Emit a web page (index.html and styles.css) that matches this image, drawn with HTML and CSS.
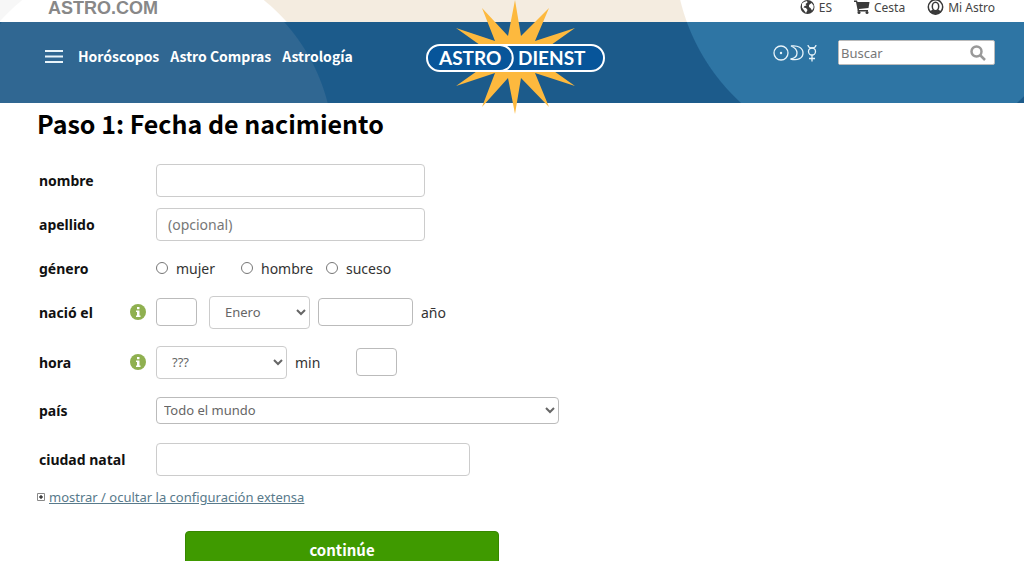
FILE: index.html
```html
<!DOCTYPE html>
<html lang="es">
<head>
    <meta charset="UTF-8">
    <meta name="viewport" content="width=device-width, initial-scale=1.0">
    <title>Paso 1: Fecha de nacimiento</title>
    <link rel="stylesheet" href="styles.css">
</head>
<body>
    <header class="header">
        <!-- top line -->
        <div class="topbar">
            <a class="site-name" href="#">ASTRO.COM</a>
            <div class="user-links">
                <a href="#">
                    <svg class="icon" width="15" height="15" viewBox="0 0 15 15">
                        <circle cx="7.5" cy="7" r="7" fill="#3a3a3a"/>
                        <path d="M2 3.500 4 2 7 1 7.500 2.500 5.500 4 6.500 5.500 4.500 6 3.500 7.500 6 8 7.500 10 6 13 4.500 11 2 7.500ZM9 5 11.500 3 13.500 5.500 13.500 8 12 10.500 10.500 8 9 7Z" fill="#fff"/>
                    </svg>
                    ES
                </a>
                <a href="#">
                    <svg class="icon" width="16" height="14" viewBox="0 0 16 14">
                        <path d="M0 0.500H3L3.500 2H15.500L14.500 8 5 9V10H14V11.500H3.500V9.500L2 2H0Z" fill="#3a3a3a"/>
                        <circle cx="5" cy="12.500" r="1.500" fill="#3a3a3a"/>
                        <circle cx="13" cy="12.500" r="1.500" fill="#3a3a3a"/>
                    </svg>
                    Cesta
                </a>
                <a href="#">
                    <svg class="icon" width="17" height="16" viewBox="0 0 17 16">
                        <circle cx="8.500" cy="7" r="7.200" fill="#fff" stroke="#3a3a3a" stroke-width="1.500"/>
                        <path d="M2.500 11.500C4 10 5.500 10 6.500 9.500H10.500C11.500 10 13 10 14.500 11.500 12 15 5 15 2.500 11.500Z" fill="#3a3a3a"/>
                        <ellipse cx="8.500" cy="6.500" rx="3.200" ry="4.200" fill="#fff" stroke="#3a3a3a" stroke-width="1.500"/>
                    </svg>
                    Mi Astro
                </a>
            </div>
        </div>

        <!-- main navigation -->
        <div class="navbar">
            <nav class="menu">
                <button class="menu-btn" type="button" aria-label="Menú">
                    <svg width="18" height="13" viewBox="0 0 18 13">
                        <path d="M0 1H18M0 6.500H18M0 12H18" stroke="#e8f4fa" stroke-width="2"/>
                    </svg>
                </button>
                <a href="#">Horóscopos</a>
                <a href="#">Astro Compras</a>
                <a href="#">Astrología</a>
            </nav>
            <div class="tools">
                <a class="planets" href="#" aria-label="Planetas">
                    <svg width="44" height="18" viewBox="0 0 44 18" fill="none" stroke="#e8f4fa" stroke-width="1.300">
                        <circle cx="8" cy="9" r="7"/>
                        <circle cx="8" cy="9" r="1.200" fill="#e8f4fa" stroke="none"/>
                        <path d="M18 2C25 1 30 4 30 9S25 17 17.500 15C21 14.500 24 12.500 24 9S22 3.500 18 2Z"/>
                        <circle cx="39" cy="7.500" r="3.500"/>
                        <path d="M35 1C35.500 5 42.500 5 43 1M39 11V17.500M36 14.500H42"/>
                    </svg>
                </a>
                <form class="search">
                    <input type="text" placeholder="Buscar" aria-label="Buscar">
                    <button type="submit" aria-label="Buscar">
                        <svg width="16" height="16" viewBox="0 0 16 16" fill="none" stroke="#999" stroke-width="2.500">
                            <circle cx="6.500" cy="6.500" r="5"/>
                            <path d="M10 10 15 15"/>
                        </svg>
                    </button>
                </form>
            </div>
        </div>

        <!-- logo over both bars -->
        <a class="logo" href="#" aria-label="Astrodienst">
            <svg width="180" height="116" viewBox="0 0 180 116">
                <path fill="#fdb93e" d="M89 0 95 36 123 8 109 41 149 28 118 50 118 64 149 86 109 73 123 107 95 78 89 114 82 78 56 107 69 73 30 86 61 64 61 50 30 28 69 41 56 8 82 36Z"/>
                <rect x="1" y="45" width="177" height="26" rx="13" fill="#07559a" stroke="#fff" stroke-width="2"/>
                <path d="M74 45C91 46 91 70 74 71" fill="none" stroke="#fff" stroke-width="2"/>
                <text class="logo-text" x="13" y="65">ASTRO</text>
                <text class="logo-text" x="92" y="65">DIENST</text>
            </svg>
        </a>
    </header>

    <main class="content">
        <h1>Paso 1: Fecha de nacimiento</h1>

        <form class="birth-form">
            <div class="row">
                <label class="name" for="nombre">nombre</label>
                <input class="field wide" type="text" id="nombre">
            </div>
            <div class="row">
                <label class="name" for="apellido">apellido</label>
                <input class="field wide" type="text" id="apellido" placeholder="(opcional)">
            </div>
            <div class="row" role="radiogroup" aria-labelledby="genero">
                <span class="name" id="genero">género</span>
                <div class="radios">
                    <label><input type="radio" name="genero">mujer</label>
                    <label><input type="radio" name="genero">hombre</label>
                    <label><input type="radio" name="genero">suceso</label>
                </div>
            </div>
            <div class="row">
                <label class="name" for="dia">nació el
                    <svg class="info" width="16" height="16" viewBox="0 0 16 16">
                        <circle cx="8" cy="8" r="8" fill="#8fb050"/>
                        <path d="M7 3H9.500V5.200H7ZM6 6.500H9.500V11.500H10.500V13H6V11.500H7V8H6Z" fill="#fff"/>
                    </svg>
                </label>
                <input class="field small" type="text" id="dia">
                <select class="field month" aria-label="mes">
                    <option>Enero</option>
                    <option>Febrero</option>
                    <option>Marzo</option>
                </select>
                <input class="field small year" type="text" id="anio">
                <label for="anio">año</label>
            </div>
            <div class="row row-hour">
                <label class="name" for="hora">hora
                    <svg class="info" width="16" height="16" viewBox="0 0 16 16">
                        <circle cx="8" cy="8" r="8" fill="#8fb050"/>
                        <path d="M7 3H9.500V5.200H7ZM6 6.500H9.500V11.500H10.500V13H6V11.500H7V8H6Z" fill="#fff"/>
                    </svg>
                </label>
                <select class="field hour" id="hora">
                    <option>???</option>
                </select>
                <label class="min" for="min">min</label>
                <input class="field small" type="text" id="min">
            </div>
            <div class="row row-country">
                <label class="name" for="pais">país</label>
                <select class="field country" id="pais">
                    <option>Todo el mundo</option>
                </select>
            </div>
            <div class="row row-city">
                <label class="name" for="ciudad">ciudad natal</label>
                <input class="field city" type="text" id="ciudad">
            </div>

            <div class="extended">
                <svg width="8" height="8" viewBox="0 0 8 8" fill="none">
                    <path d="M0.500 0.500H7.500V7.500H0.500Z" stroke="#888"/>
                    <path d="M2 4H6M4 2V6" stroke="#000"/>
                </svg>
                <a href="#">mostrar / ocultar la configuración extensa</a>
            </div>

            <button class="submit" type="submit">continúe</button>
        </form>
    </main>
</body>
</html>
```
FILE: styles.css
```css
* {
    margin: 0;
    padding: 0;
    box-sizing: border-box;
}

body {
    background: #fff;
    color: #333;
    font-family: "Noto Sans", sans-serif;
    font-size: 14px;
}

a {
    color: inherit;
    text-decoration: none;
}

svg {
    display: block;
}

input,
select,
button {
    font-family: inherit;
    font-size: inherit;
}

/* header */
.header {
    position: relative;
}

.topbar {
    display: flex;
    justify-content: space-between;
    height: 22px;
    padding: 0 29px 0 48px;
    background:
        radial-gradient(circle at 143px 150px, #fff 192px, transparent 193px),
        radial-gradient(circle at calc(100% - 145px) -48px, #fff 204px, transparent 205px),
        linear-gradient(90deg, #f7f7f7 100px, #f4ece0 100px);
}

.site-name {
    color: #888;
    font: bold 18px/16px "Liberation Sans", Arial, sans-serif;
}

.user-links {
    display: flex;
    gap: 22px;
    color: #444;
    font-size: 12px;
    line-height: 16px;
}

.user-links a {
    display: flex;
    gap: 4px;
}

.navbar {
    display: flex;
    justify-content: space-between;
    height: 81px;
    padding: 18px 29px 0 45px;
    background:
        radial-gradient(circle at 143px 128px, #306792 190px, transparent 191px),
        radial-gradient(circle at calc(100% - 145px) -70px, #2e75a4 204px, transparent 205px),
        #1c5b8b;
}

.menu {
    display: flex;
    align-items: center;
    gap: 11px;
    height: 32px;
    color: #fff;
    font: bold 14px "Noto Sans CJK SC", sans-serif;
}

.menu-btn {
    margin-right: 4px;
    background: none;
    border: none;
}

.tools {
    display: flex;
    gap: 21px;
}

.planets {
    padding-top: 4px;
}

.search {
    display: flex;
    width: 157px;
    height: 25px;
    background: #fff;
    border: 1px solid #bbb;
    border-radius: 2px;
}

.search input {
    flex: 1;
    min-width: 0;
    padding-left: 2px;
    border: none;
    font-size: 13px;
}

.search button {
    padding: 0 8px;
    background: none;
    border: none;
}

.logo {
    position: absolute;
    top: 0;
    left: 50%;
    margin-left: -86px;
}

.logo-text {
    fill: #fff;
    font: bold 19px Lato, sans-serif;
}

/* form */
.content {
    padding: 0 37px;
}

h1 {
    color: #000;
    font: bold 25px/40px "Noto Sans CJK SC", sans-serif;
}

.birth-form {
    padding-top: 15px;
}

.row {
    display: flex;
    align-items: center;
    height: 44px;
}

.row-hour {
    height: 56px;
}

.row-country {
    height: 40px;
}

.row-city {
    height: 58px;
}

.name {
    display: flex;
    align-items: center;
    justify-content: space-between;
    width: 119px;
    padding: 0 10px 0 2px;
    color: #111;
    font-weight: bold;
}

.field {
    height: 33px;
    padding: 0 11px;
    background: #fff;
    border: 1px solid #ccc;
    border-radius: 4px;
    color: #666;
}

.field::placeholder,
.search input::placeholder {
    color: #777;
}

.wide {
    width: 269px;
}

.small {
    width: 41px;
    height: 28px;
    border-color: #bbb;
}

select.field {
    font-size: 13px;
}

.month {
    width: 101px;
    margin: 0 8px 0 12px;
}

.year {
    width: 95px;
    margin-right: 8px;
}

.hour {
    width: 131px;
    margin-right: 8px;
}

.min {
    width: 61px;
}

.country {
    width: 403px;
    height: 27px;
    padding: 0 3px;
    border-color: #bbb;
}

.city {
    width: 314px;
}

.radios {
    display: flex;
}

.radios label {
    display: flex;
    align-items: center;
    gap: 8px;
    width: 85px;
}

.radios input {
    width: 12px;
    height: 12px;
}

.extended {
    display: flex;
    align-items: center;
    gap: 4px;
    height: 18px;
    font-size: 13px;
}

.extended a {
    color: #587a8b;
    text-decoration: underline;
}

.submit {
    display: block;
    width: 314px;
    height: 36px;
    margin: 25px 0 0 148px;
    background: #3f9a00;
    border: 1px solid #378700;
    border-radius: 4px;
    color: #fff;
    font: bold 15px "Noto Sans CJK SC", sans-serif;
}
```
